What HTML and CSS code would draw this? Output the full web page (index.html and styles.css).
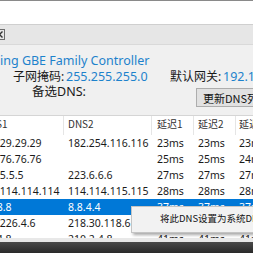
FILE: index.html
```html
<!DOCTYPE html>
<html lang="zh-CN">
<head>
  <meta charset="UTF-8">
  <title>DNS 测速</title>
  <link rel="stylesheet" href="styles.css">
</head>
<body>
  <div class="topbar"></div>
  <div class="tabbar">
    <svg class="tab-close" width="11" height="11" viewBox="0 0 11 11">
      <rect x="0.5" y="0.5" width="10" height="10" fill="none" stroke="#6d6d6d"/>
      <path d="M2.5 2.5 L8.5 8.5 M8.5 2.5 L2.5 8.5" stroke="#333" stroke-width="1.4"/>
    </svg>
  </div>

  <div class="adapter">ing GBE Family Controller</div>

  <div class="net-row">
    <div class="net-item mask"><span class="lbl">子网掩码:</span><span class="val">255.255.255.0</span></div>
    <div class="net-item"><span class="lbl">默认网关:</span><span class="val">192.168.1.1</span></div>
  </div>

  <div class="dns-row">
    <div class="dns-label">备选DNS:</div>
    <button class="btn">更新DNS列表</button>
  </div>

  <div class="dns-table">
    <div class="thead">
      <div>DNS1</div>
      <div>DNS2</div>
      <div>延迟1</div>
      <div>延迟2</div>
      <div>延迟3</div>
    </div>
    <div class="trow"><div>119.29.29.29</div><div>182.254.116.116</div><div>23ms</div><div>23ms</div><div>23ms</div></div>
    <div class="trow"><div>180.76.76.76</div><div></div><div>25ms</div><div>25ms</div><div>24ms</div></div>
    <div class="trow"><div>223.5.5.5</div><div>223.6.6.6</div><div>27ms</div><div>27ms</div><div>27ms</div></div>
    <div class="trow"><div>114.114.114.114</div><div>114.114.115.115</div><div>28ms</div><div>28ms</div><div>28ms</div></div>
    <div class="trow selected"><div>8.8.8.8</div><div>8.8.4.4</div><div>37ms</div><div>37ms</div><div>37ms</div></div>
    <div class="trow"><div>101.226.4.6</div><div>218.30.118.6</div><div>38ms</div><div>38ms</div><div>38ms</div></div>
    <div class="trow"><div>1.2.4.8</div><div>210.2.4.8</div><div>41ms</div><div>41ms</div><div>41ms</div></div>
  </div>
  <div class="hscroll"></div>
  <div class="taskbar"></div>

  <div class="menu">将此DNS设置为系统DNS</div>
</body>
</html>
```

FILE: styles.css
```css
* {
  box-sizing: border-box;
}
body {
  margin: 0;
  width: 253px;
  height: 253px;
  overflow: hidden;
  position: relative;
  background: #f0f0f0;
  font-family: "Noto Sans", "Noto Sans CJK SC", sans-serif;
  color: #1a1a1a;
}
.topbar {
  height: 24px;
  background: #fff;
  border-top: 1px solid #8a8a8a;
}
.tabbar {
  height: 21px;
  background: #e6e6e6;
  border-top: 1px solid #cfcfcf;
  border-bottom: 1px solid #d9d9d9;
  display: flex;
  align-items: center;
}
.tab-close {
  margin-left: -6px;
}
.adapter {
  margin-top: 8px;
  height: 16px;
  line-height: 16px;
  font-size: 12.5px;
  color: #1d82cc;
  white-space: nowrap;
}
.net-row {
  display: flex;
  height: 15px;
  line-height: 15px;
  font-size: 12.5px;
  white-space: nowrap;
}
.net-item {
  flex: none;
}
.net-item.mask {
  width: 157px;
  margin-left: 13px;
}
.lbl {
  display: inline-block;
  width: 53px;
  font-size: 12px;
}
.val {
  color: #1d82cc;
}
.dns-row {
  display: flex;
  align-items: flex-start;
  height: 24px;
  white-space: nowrap;
}
.dns-label {
  flex: none;
  width: 196px;
  padding-left: 32px;
  font-size: 12.5px;
  line-height: 16px;
}
.btn {
  flex: none;
  margin-top: 4px;
  height: 19px;
  padding: 0 6px;
  background: #e1e1e1;
  border: 1px solid #adadad;
  border-radius: 0;
  font-family: "Noto Sans CJK SC", sans-serif;
  font-size: 11px;
  color: #111;
}
.dns-table {
  margin-top: 7px;
  margin-left: -27px;
  height: 123px;
  overflow: hidden;
  background: #fff;
  border-top: 1px solid #d5d5d5;
}
.thead,
.trow {
  display: grid;
  grid-template-columns: 91px 88px 42px 42px 42px;
  white-space: nowrap;
}
.thead {
  height: 19px;
  font-family: "Noto Sans CJK SC", sans-serif;
  font-size: 10px;
  line-height: 15px;
  color: #333;
}
.thead div {
  border-right: 1px solid #e5e5e5;
}
.trow {
  height: 16px;
  line-height: 16px;
  font-size: 10.5px;
}
.trow div,
.thead div {
  padding-left: 4px;
  overflow: hidden;
}
.trow div:first-child {
  padding-left: 6px;
}
.thead div:first-child {
  padding-left: 9px;
}
.trow div:nth-child(3),
.thead div:nth-child(3) {
  padding-left: 5px;
}
.trow div:nth-child(5),
.thead div:nth-child(5) {
  padding-left: 3px;
}
.trow.selected {
  background: #0078d7;
  color: #fff;
}
.hscroll {
  height: 4px;
  background: #e8e8e8;
}
.taskbar {
  height: 12px;
  background: linear-gradient(#4a4a4a, #262626);
}
.menu {
  position: absolute;
  left: 131px;
  top: 206px;
  width: 140px;
  height: 27px;
  padding-left: 28px;
  background: #f2f2f2;
  border: 1px solid #c4c4c4;
  box-shadow: 2px 2px 3px rgba(0, 0, 0, 0.35);
  font-family: "Noto Sans CJK SC", sans-serif;
  font-size: 9.5px;
  line-height: 23px;
  color: #111;
  white-space: nowrap;
}
```
